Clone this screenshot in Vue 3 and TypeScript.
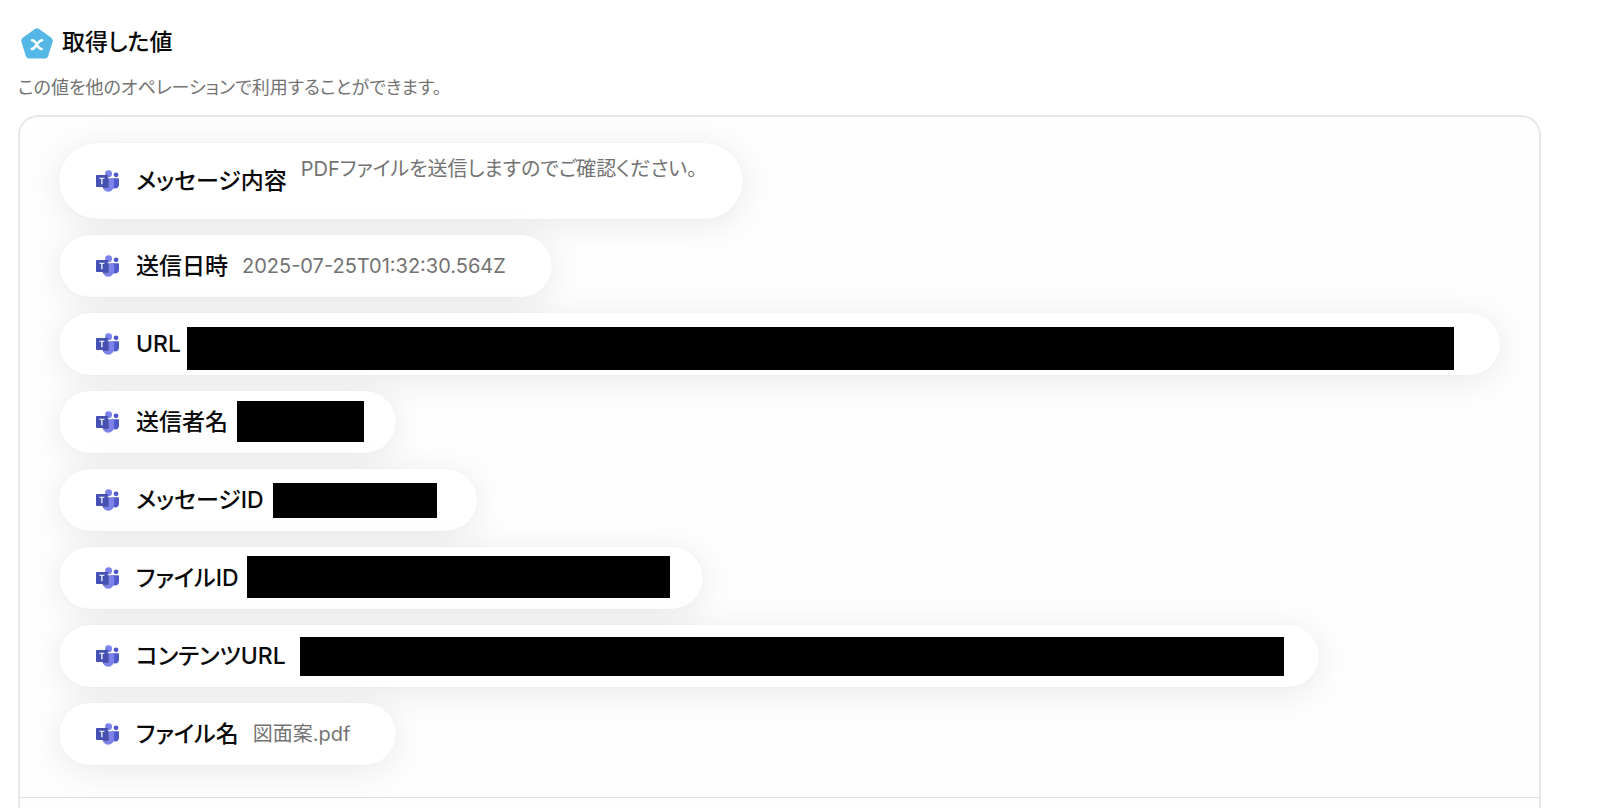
<script setup lang="ts">
interface Mask {
  valueWidth: number
  left: number
  top: number
  width: number
  height: number
}

interface Item {
  label: string
  value?: string
  multiline?: boolean
  mask?: Mask
}

const items: Item[] = [
  { label: 'メッセージ内容', value: 'PDFファイルを送信しますのでご確認ください。', multiline: true },
  { label: '送信日時', value: '2025-07-25T01:32:30.564Z' },
  { label: 'URL', mask: { valueWidth: 1259, left: 187, top: 14, width: 1267, height: 43 } },
  { label: '送信者名', mask: { valueWidth: 108, left: 237, top: 10, width: 127, height: 41 } },
  { label: 'メッセージID', mask: { valueWidth: 153, left: 273, top: 14, width: 164, height: 35 } },
  { label: 'ファイルID', mask: { valueWidth: 404, left: 247, top: 9, width: 423, height: 42 } },
  { label: 'コンテンツURL', mask: { valueWidth: 973, left: 300, top: 12, width: 984, height: 39 } },
  { label: 'ファイル名', value: '図面案.pdf' },
]

const pillLeft = 59

const valueStyle = (item: Item) => (item.mask ? { width: `${item.mask.valueWidth}px` } : {})

const maskStyle = (mask: Mask) => ({
  left: `${mask.left - pillLeft}px`,
  top: `${mask.top}px`,
  width: `${mask.width}px`,
  height: `${mask.height}px`,
})
</script>

<template>
  <main class="page">
    <header class="head">
      <svg class="badge" viewBox="0 0 32 32" aria-hidden="true">
        <path
          d="M13.6 1.2Q16 -.5 18.4 1.2L30 9.6Q32.4 11.4 31.500 14.100L27.200 28Q26.300 30.500 23.700 30.500H8.300Q5.700 30.500 4.800 28L.5 14.100Q-.4 11.400 2 9.600Z"
          fill="#54b7e6"
        />
        <path
          d="M11.200 12.200C13.200 12.200 14 13.400 15.800 16.600C17.600 19.800 18.400 21 20.600 21M21 12.200C18.800 12.200 17.800 13.800 15.800 16.600C13.800 19.400 12.800 21 10.800 21"
          fill="none"
          stroke="#fff"
          stroke-width="2.600"
          stroke-linecap="round"
        />
      </svg>
      <h1 class="title">取得した値</h1>
    </header>
    <p class="lead">この値を他のオペレーションで利用することができます。</p>

    <section class="panel">
      <ul class="list">
        <li v-for="item in items" :key="item.label" class="pill" :class="{ tall: item.multiline }">
          <svg class="teams" viewBox="0 0 2228.833 2073.333" aria-hidden="true">
            <path fill="#5059C9" d="M1554.637 777.500h575.713c54.391 0 98.483 44.092 98.483 98.483v524.398c0 199.901-162.051 361.952-361.952 361.952h-1.711c-199.901.028-361.975-162-362.004-361.901V828.971c.001-28.427 23.045-51.471 51.471-51.471z" />
            <circle fill="#5059C9" cx="1943.750" cy="440.583" r="233.250" />
            <circle fill="#7B83EB" cx="1218.083" cy="336.917" r="336.917" />
            <path fill="#7B83EB" d="M1667.323 777.500H717.010c-53.743 1.330-96.257 45.931-95.010 99.676v598.105c-7.505 322.519 247.657 590.160 570.167 598.053 322.510-7.893 577.671-275.534 570.167-598.053V877.176c1.245-53.745-41.268-98.346-95.011-99.676z" />
            <path opacity=".3" d="M1244 777.500v838.145c-.258 38.435-23.549 72.964-59.090 87.598-11.316 4.787-23.478 7.254-35.765 7.257H667.613a561 561 0 0 1-45.613-234.600V877.020c-1.246-53.658 41.122-98.198 94.780-99.520z" />
            <path opacity=".25" d="M1192.167 561.355v111.442a334 334 0 0 1-278.340-233.297h181.427c53.421.203 96.710 43.434 96.913 96.855z" />
            <path fill="#4550b5" d="M95.010 466.500h950.312c52.473 0 95.010 42.538 95.010 95.010v950.312c0 52.473-42.538 95.010-95.010 95.010H95.010c-52.473 0-95.010-42.538-95.010-95.010V561.510c0-52.472 42.538-95.010 95.010-95.010z" />
            <path fill="#fff" d="M820.211 828.193H630.241v517.297H509.211V828.193H320.123V727.844h500.088z" />
          </svg>
          <span class="label">{{ item.label }}</span>
          <span class="value" :style="valueStyle(item)">{{ item.value }}</span>
          <span v-if="item.mask" class="mask" :style="maskStyle(item.mask)"></span>
        </li>
      </ul>
    </section>
  </main>
</template>

<style>
html,
body {
  margin: 0;
  background: #fff;
}

body {
  overflow: hidden;
}
</style>

<style scoped>
.page {
  box-sizing: border-box;
  min-height: 100vh;
  display: flex;
  flex-direction: column;
  padding: 23px 59px 0 18px;
  background: #fff;
  color: #0a0a0a;
  font-family: Inter, "Noto Sans CJK JP", sans-serif;
  font-feature-settings: "palt";
}

.head {
  display: flex;
  align-items: center;
  gap: 9px;
  padding-left: 3px;
}

.badge {
  width: 32px;
  height: 32px;
  margin-top: 4px;
}

.title {
  margin: 0;
  font-size: 23px;
  font-weight: 500;
  line-height: 38px;
}

.lead {
  margin: 11px 0;
  font-size: 18px;
  line-height: 32px;
  color: #737373;
}

.panel {
  flex: 1;
  border: 2px solid #e8e8e8;
  border-bottom: 0;
  border-radius: 20px 20px 0 0;
  background: #fefefe;
}

.list {
  margin: 0;
  padding: 26px 39px 32px;
  list-style: none;
  display: flex;
  flex-direction: column;
  align-items: flex-start;
  gap: 16px;
  border-bottom: 1px solid #e0e0e0;
}

.pill {
  position: relative;
  box-sizing: border-box;
  height: 62px;
  display: flex;
  align-items: center;
  padding: 0 46px 0 37px;
  border-radius: 38px;
  background: #fff;
  box-shadow:
    0 0 1px rgba(0, 0, 0, 0.08),
    0 5px 36px rgba(0, 0, 0, 0.09);
  white-space: nowrap;
}

.tall {
  height: 76px;
}

.teams {
  flex: none;
  width: 23px;
  height: 22px;
}

.label {
  margin: 0 14px 0 17px;
  font-size: 23px;
  font-weight: 500;
  line-height: 32px;
}

.value {
  flex: none;
  font-size: 20px;
  line-height: 24px;
  color: #737373;
}

.tall .value {
  height: 48px;
}

.mask {
  position: absolute;
  background: #000;
}
</style>
